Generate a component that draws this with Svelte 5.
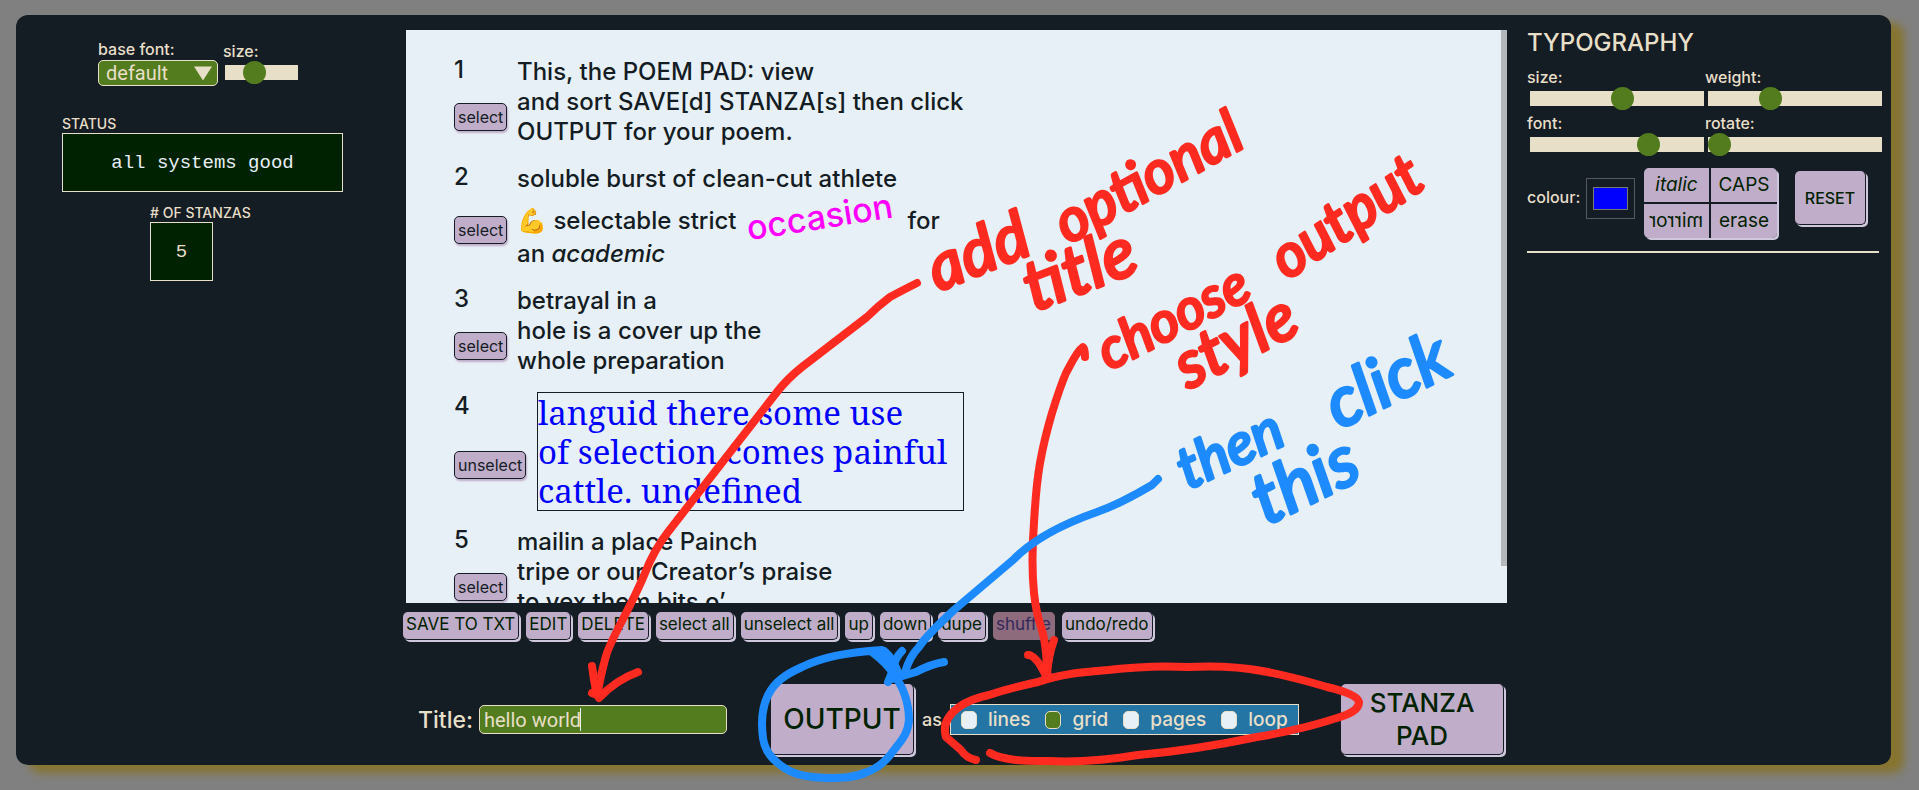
<script>
  const tools = ['SAVE TO TXT', 'EDIT', 'DELETE', 'select all', 'unselect all', 'up', 'down', 'dupe', 'shuffle', 'undo/redo'];
  const styles = ['lines', 'grid', 'pages', 'loop'];
  let outputStyle = $state('grid');
  let title = $state('hello world');

  const notes = [
    { text: 'add', x: 938, y: 292, angle: -22, size: 66, tone: 'red' },
    { text: 'optional', x: 1068, y: 245, angle: -29, size: 60, tone: 'red' },
    { text: 'title', x: 1034, y: 312, angle: -21, size: 70, tone: 'red' },
    { text: 'choose', x: 1109, y: 371, angle: -27, size: 56, tone: 'red' },
    { text: 'output', x: 1287, y: 281, angle: -34, size: 60, tone: 'red' },
    { text: 'style', x: 1188, y: 390, angle: -27, size: 66, tone: 'red' },
    { text: 'then', x: 1188, y: 490, angle: -25, size: 58, tone: 'blue' },
    { text: 'click', x: 1339, y: 430, angle: -26, size: 70, tone: 'blue' },
    { text: 'this', x: 1266, y: 526, angle: -26, size: 72, tone: 'blue' }
  ];
</script>

<div class="panel">
  <aside class="left">
    <div class="base">
      <div class="field">
        <label for="base-font">base font:</label>
        <div class="picker">
          <select id="base-font"><option>default</option></select>
          <svg class="chevron" viewBox="0 0 19 15" aria-hidden="true"><path d="M0 0H19L9.500 15Z" /></svg>
        </div>
      </div>
      <div class="field short">
        <label for="base-size">size:</label>
        <input id="base-size" type="range" min="0" max="100" value="35" />
      </div>
    </div>
    <section class="status">
      <h2>STATUS</h2>
      <output class="screen bright">all systems good</output>
    </section>
    <section class="count">
      <h2># OF STANZAS</h2>
      <output class="screen">5</output>
    </section>
  </aside>

  <main>
    <div class="paper">
      <div class="stanza">
        <div class="side"><span>1</span><button>select</button></div>
        <p>This, the POEM PAD: view<br />and sort SAVE[d] STANZA[s] then click<br />OUTPUT for your poem.</p>
      </div>
      <div class="stanza mixed">
        <div class="side"><span>2</span><button>select</button></div>
        <p>soluble burst of clean-cut athlete<span class="tall">💪 selectable strict <b class="tilt">occasion</b> for</span>an <em>academic</em></p>
      </div>
      <div class="stanza">
        <div class="side"><span>3</span><button>select</button></div>
        <p>betrayal in a<br />hole is a cover up the<br />whole preparation</p>
      </div>
      <div class="stanza chosen">
        <div class="side"><span>4</span><button>unselect</button></div>
        <p>languid there some use<br />of selection comes painful<br />cattle. undefined</p>
      </div>
      <div class="stanza">
        <div class="side"><span>5</span><button>select</button></div>
        <p>mailin a place Painch<br />tripe or our Creator’s praise<br />to vex them bits o’</p>
      </div>
      <div class="scroll"></div>
    </div>

    <div class="tools">
      {#each tools as tool}
        <button class="raised" disabled={tool === 'shuffle'}>{tool}</button>
      {/each}
    </div>

    <div class="bottom">
      <label class="title" for="title">Title:</label>
      <div class="entry">
        <input id="title" type="text" bind:value={title} />
        <i class="caret"></i>
      </div>
      <button class="raised big output">OUTPUT</button>
      <span class="as">as</span>
      <div class="choices" role="radiogroup" aria-label="as">
        {#each styles as s}
          <label><input type="radio" name="style" value={s} bind:group={outputStyle} />{s}</label>
        {/each}
      </div>
      <button class="raised big pad">STANZA PAD</button>
    </div>
  </main>

  <aside class="right">
    <h1>TYPOGRAPHY</h1>
    <div class="sliders">
      <div class="field"><label for="t-size">size:</label><input id="t-size" type="range" min="0" max="200" value="107" /></div>
      <div class="field"><label for="t-weight">weight:</label><input id="t-weight" type="range" min="0" max="200" value="67" /></div>
      <div class="field"><label for="t-font">font:</label><input id="t-font" type="range" min="0" max="100" value="71" /></div>
      <div class="field"><label for="t-rotate">rotate:</label><input id="t-rotate" type="range" min="0" max="100" value="0" /></div>
    </div>
    <div class="actions">
      <label for="colour">colour:</label>
      <input id="colour" type="color" value="#0000ff" />
      <div class="group">
        <button><em>italic</em></button>
        <button>CAPS</button>
        <button><span class="mirror">mirror</span></button>
        <button>erase</button>
      </div>
      <button class="raised reset">RESET</button>
    </div>
    <hr />
  </aside>

  <svg class="ink" width="1919" height="790" viewBox="0 0 1919 790">
    <g class="red line">
      <path d="M917 283Q903 290 890 297Q878 306 867 317L802 367Q787 379 777 392L668 532Q654 550 645 573C632 605 613 635 607 653C602 668 600 682 597 695" />
      <path d="M592 666Q594 682 597 695L592 693M638 672Q616 680 599 698" />
      <path d="M1085 357Q1085 348 1083 347C1076 352 1071 364 1066 373C1060 387 1056 400 1052 413C1047 430 1043 446 1040 463C1036 486 1035 505 1034 523Q1031 562 1034 593Q1036 612 1041 627Q1047 645 1047 676" />
      <path d="M1028 655Q1036 655 1046 676M1054 640Q1048 657 1047 676" />
      <path d="M976 760Q966 758 961 750L946 737Q941 720 959 707Q970 699 989 695Q1010 688 1038 682C1060 674 1083 672 1108 670Q1150 665 1188 667Q1230 665 1262 671C1290 676 1310 682 1327 687Q1357 694 1359 702C1359 710 1350 714 1337 718Q1300 730 1257 737Q1195 750 1138 755Q1090 763 1048 761Q1005 762 990 753" />
    </g>
    <g class="blue line">
      <path d="M1158 479L1152 485Q1120 504 1097 512Q1040 532 1013 560L954 610Q925 637 919 647Q910 656 905 672" />
      <path d="M902 651Q894 659 893 670L888 682M944 662Q931 664 916 672L889 680" />
      <path d="M872 652Q888 664 894 675C903 686 909 703 909 720C908 734 901 741 894 750Q882 767 867 772C854 778 841 778 829 778Q798 778 783 767Q765 755 763 738Q759 708 771 690C779 678 791 672 802 667Q830 653 882 650Q890 654 899 674" />
      <path class="blot" d="M870 651L885 649Q896 658 900 674L891 672Q883 661 870 651Z" />
    </g>
    {#each notes as n}
      <text class={n.tone} font-size={n.size} transform="translate({n.x} {n.y}) rotate({n.angle})">{n.text}</text>
    {/each}
  </svg>
</div>

<style>
  :global(body) { background: #808080; }
  * { box-sizing: border-box; }
  .panel {
    display: grid;
    grid-template-columns: 390px minmax(0, 1fr) 384px;
    margin: 15px 28px 24px 16px;
    min-height: 750px;
    border-radius: 12px;
    background: #141c24;
    box-shadow: 13px 8px 8px #86742f;
    color: #e8dfc8;
    font: 500 16px/20px Inter, Lato, sans-serif;
  }
  button, input, select { font: inherit; color: inherit; margin: 0; }
  h1, h2, p { margin: 0; font-weight: 500; }
  .field { display: flex; flex-direction: column; }

  .left { display: flex; flex-direction: column; }
  .base { display: flex; gap: 5px; padding: 24px 0 0 82px; }
  .base label { height: 21px; }
  .short { width: 75px; padding-top: 2px; }
  .short input { width: 73px; margin: 3px 0 0 2px; }
  .picker { position: relative; width: 120px; }
  select {
    appearance: none;
    display: block;
    width: 100%;
    height: 26px;
    padding: 0 7px;
    border: 1px solid #e8dfc8;
    border-radius: 5px;
    background: #527c1e;
    font: 20px/24px Roboto, sans-serif;
  }
  .chevron { position: absolute; right: 6px; top: 6px; width: 18px; height: 15px; fill: #e8dfc8; pointer-events: none; }
  input[type='range'] { appearance: none; display: block; height: 15px; background: #e8dfc8; }
  input[type='range']::-webkit-slider-thumb { appearance: none; width: 23px; height: 23px; border-radius: 50%; background: #527c1e; }
  h2 { font-size: 14px; line-height: 18px; }
  .status { margin: 29px 63px 0 46px; padding-bottom: 12px; }
  .count { margin-left: 134px; }
  .screen {
    display: flex;
    align-items: center;
    justify-content: center;
    height: 59px;
    border: 1px solid #e8dfc8;
    background: #002200;
    font: 400 19px/24px 'Liberation Mono', monospace;
  }
  .bright { color: #e8f0f7; }
  .count .screen { width: 63px; }

  .paper {
    position: relative;
    height: 573px;
    margin-top: 15px;
    padding: 27px 0 0 48px;
    overflow: hidden;
    background: #e8f0f7;
    color: #141c24;
    font-size: 24px;
    line-height: 30px;
  }
  .stanza { display: flex; align-items: flex-start; margin-bottom: 17px; }
  .stanza p { font-weight: 500; }
  .side { flex: none; display: flex; flex-direction: column; align-items: flex-start; gap: 18px; width: 63px; margin-top: -2px; }
  .side button {
    height: 28px;
    padding: 0 3px;
    border: 1px solid #141c24;
    border-radius: 5px;
    background: #c0adca;
    box-shadow: 1px 2px 2px #c0adca;
    font-size: 16px;
    font-weight: 400;
    line-height: 20px;
  }
  .mixed .side { gap: 24px; }
  .mixed p { height: 105px; }
  .tall { display: block; height: 45px; line-height: 54px; }
  .tilt { display: inline-block; margin: 0 8px 0 3px; color: #f0f; font-size: 34px; font-weight: 500; line-height: 42px; transform: rotate(-9deg); }
  .chosen { margin-bottom: 16px; }
  .chosen .side { gap: 30px; width: 83px; }
  .chosen p { width: 427px; height: 119px; margin-top: -1px; border: 1px solid #141c24; color: #00f; font: 400 33px/39px 'Noto Serif', 'Liberation Serif', serif; }
  .scroll { position: absolute; top: 0; right: 0; width: 6px; height: 536px; background: #b5b8bb; }

  .raised {
    border: 0;
    border-right: 1px solid #141c24;
    border-bottom: 1px solid #141c24;
    border-radius: 5px;
    background: #c0adca;
    box-shadow: 2px 2px 0 #cfc8dc;
    color: #002200;
  }
  .tools { display: flex; gap: 7px; margin: 9px 0 0 -3px; }
  .tools button { height: 28px; padding: 0 3px 3px; font-size: 17px; font-weight: 400; white-space: nowrap; }
  .tools button:disabled { background: #8e6b7c; color: #33285c; box-shadow: none; border-color: #8e6b7c; }

  .bottom { display: flex; align-items: center; height: 71px; margin-top: 44px; padding-left: 12px; }
  .title { width: 61px; font-size: 23px; }
  .entry { position: relative; width: 248px; margin-right: 44px; }
  .entry input {
    display: block;
    width: 100%;
    height: 29px;
    padding: 0 4px;
    border: 1px solid #e8dfc8;
    border-radius: 5px;
    background: #527c1e;
    font: 20px/24px Roboto, sans-serif;
  }
  .caret { position: absolute; left: 101px; top: 3px; width: 1px; height: 23px; background: #e8f0f7; }
  .big { height: 71px; padding: 0; }
  .output { width: 143px; font-size: 28px; }
  .as { width: 36px; padding-left: 8px; font-size: 18px; }
  .choices {
    display: flex;
    align-items: center;
    gap: 15px;
    height: 31px;
    padding: 0 10px;
    border: 1px solid #e8dfc8;
    background: #2474a4;
    font-size: 19px;
  }
  .choices label { display: flex; align-items: center; gap: 11px; }
  .choices input { appearance: none; width: 16px; height: 18px; border: 1px solid #e8dfc8; border-radius: 5px; background: #e8f0f7; }
  .choices input:checked { background: #527c1e; }
  .pad { width: 163px; margin: 0 3px 0 auto; padding: 0 20px; font-size: 26px; line-height: 33px; }

  .right { padding: 14px 9px 0 20px; }
  h1 { font-size: 24px; line-height: 28px; }
  .sliders { display: grid; grid-template-columns: 1fr 1fr; row-gap: 7px; column-gap: 1px; margin: 10px 0 0; }
  .sliders .field { gap: 4px; }
  .sliders input { margin-left: 3px; width: calc(100% - 3px); }
  .sliders label { line-height: 20px; }
  .actions { display: flex; align-items: center; margin-top: 16px; height: 70px; }
  .actions label { width: 59px; margin-top: -12px; }
  input[type='color'] { appearance: none; width: 49px; height: 41px; margin-top: -10px; padding: 8px 6px; border: 1px solid #55585c; background: none; }
  input[type='color']::-webkit-color-swatch-wrapper { padding: 0; }
  input[type='color']::-webkit-color-swatch { border: 1px solid #777; border-radius: 0; }
  .group {
    display: grid;
    grid-template-columns: 65px 66px;
    gap: 2px;
    width: 133px;
    margin: 0 18px 0 9px;
    border-radius: 5px;
    box-shadow: 2px 2px 0 #cfc8dc;
    background: #141c24;
  }
  .group button { height: 34px; padding: 0; border: 0; background: #c0adca; color: #002200; font-size: 19px; font-weight: 400; }
  .group button:first-child { border-radius: 5px 0 0 0; }
  .group button:nth-child(2) { border-radius: 0 5px 0 0; }
  .group button:nth-child(3) { border-radius: 0 0 0 5px; }
  .group button:last-child { border-radius: 0 0 5px 0; }
  .mirror { display: inline-block; transform: scaleX(-1); }
  .reset { width: 71px; height: 54px; padding: 0; margin-top: -10px; }
  hr { height: 2px; margin: 13px 3px 0 0; border: 0; background: #e8dfc8; }

  .ink { position: absolute; left: 0; top: 0; pointer-events: none; }
  .line path { fill: none; stroke-width: 8; stroke-linecap: round; stroke-linejoin: round; }
  .red { stroke: #ff2a20; fill: #ff2a20; }
  .blue { stroke: #1e8aff; fill: #1e8aff; }
  .line .blot { fill: #1e8aff; stroke-width: 4; }
  .ink text { font-family: Lato, sans-serif; font-style: italic; stroke-width: 3; stroke-linejoin: round; }
</style>
